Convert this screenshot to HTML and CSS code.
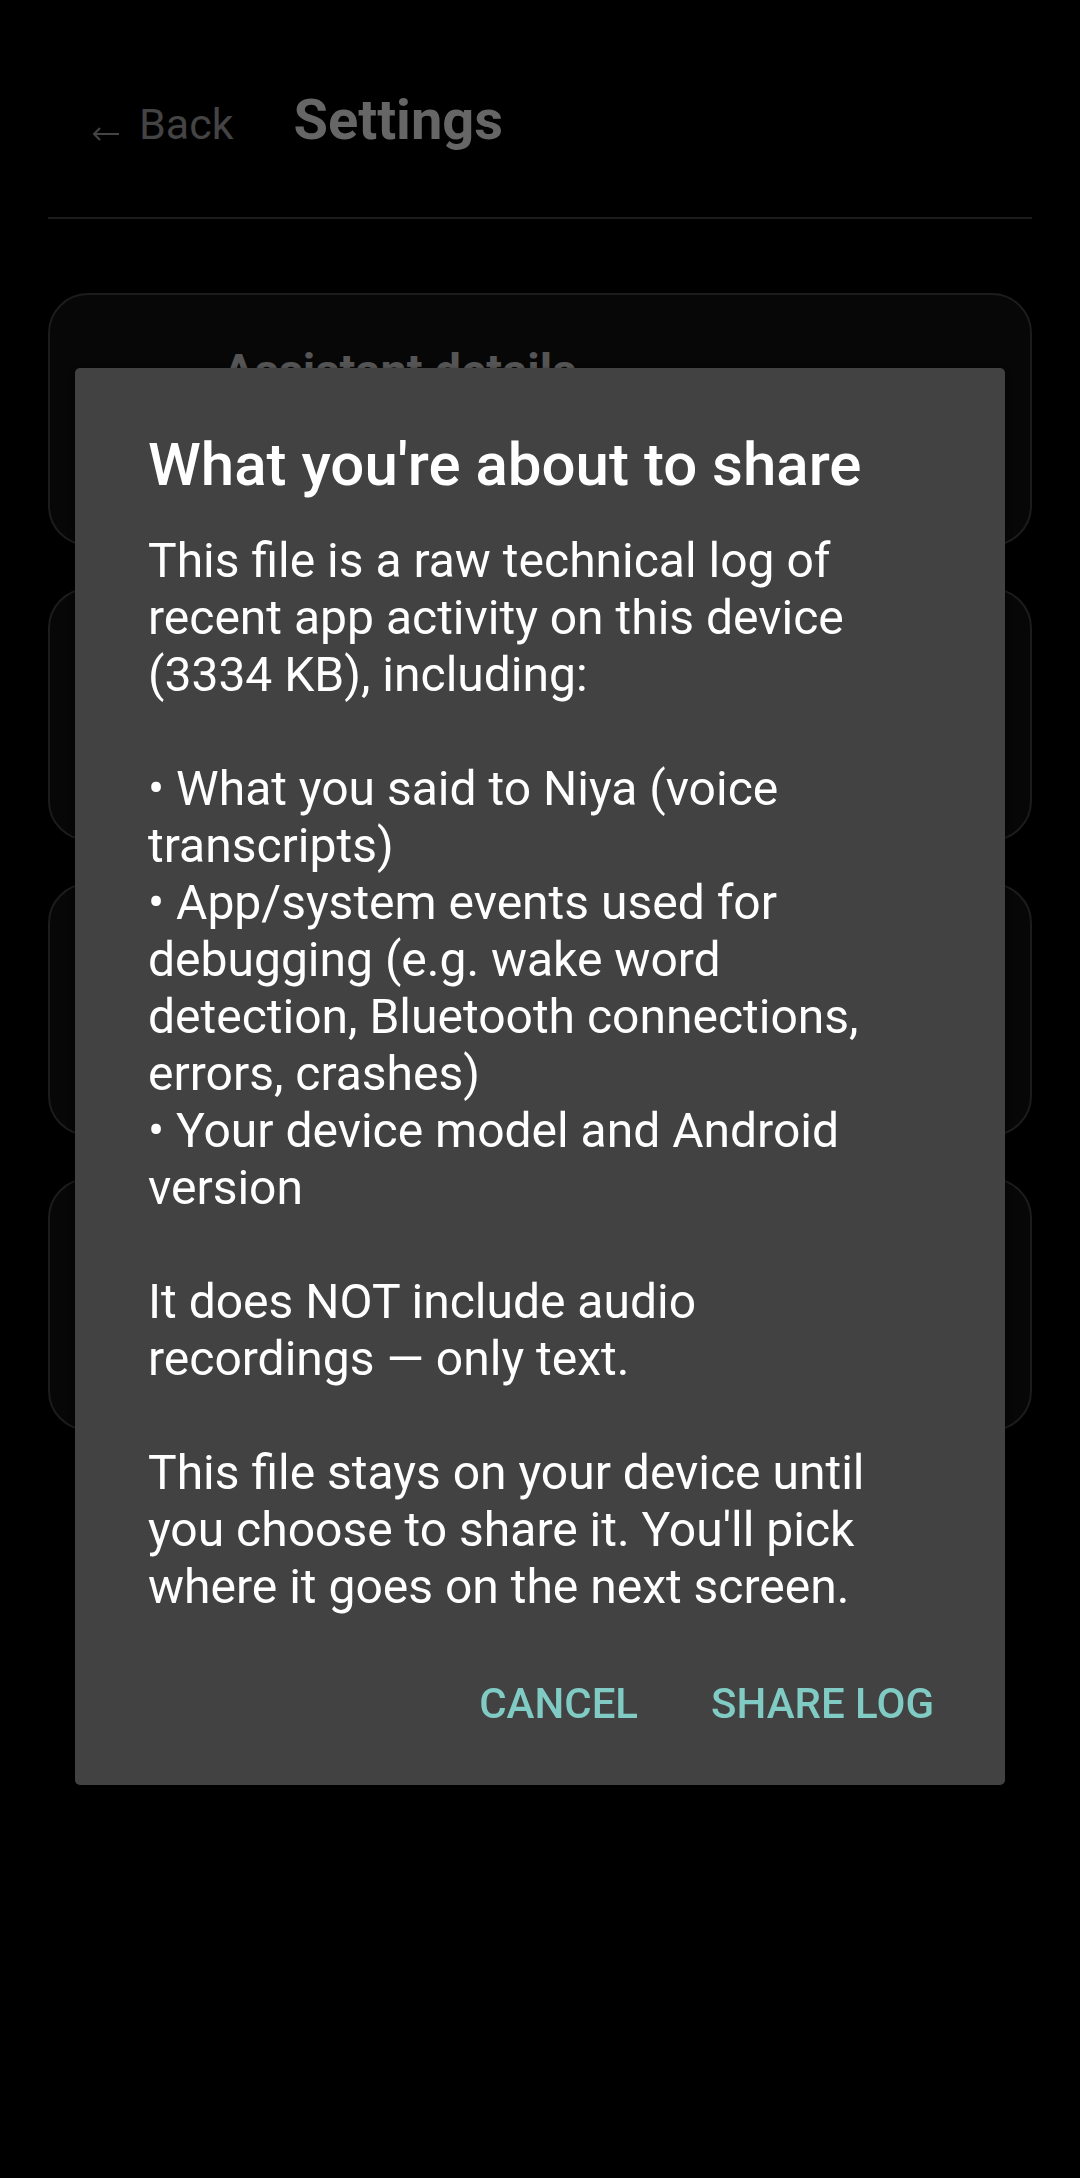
FILE: index.html
```html
<!DOCTYPE html>
<html lang="en">
<head>
<meta charset="utf-8">
<title>Settings</title>
<link rel="stylesheet" href="styles.css">
</head>
<body>
<div class="page">
  <header class="header">
    <div class="back">
      <svg class="back-arrow" width="28" height="16" viewBox="0 0 28 16" aria-hidden="true">
        <path d="M27 8H2M8 2L2 8l6 6" fill="none" stroke="#444" stroke-width="2"/>
      </svg>
      <span class="back-label">Back</span>
    </div>
    <h1 class="title">Settings</h1>
  </header>
  <main class="cards">
    <section class="card"><div class="card-title">Assistant details</div></section>
    <section class="card"></section>
    <section class="card"></section>
    <section class="card"></section>
  </main>
</div>

<div class="scrim">
  <div class="dialog" role="dialog">
    <h2 class="dialog-title">What you're about to share</h2>
    <p class="dialog-body">This file is a raw technical log of<br>recent app activity on this device<br>(3334 KB), including:<br><br>• What you said to Niya (voice<br>transcripts)<br>• App/system events used for<br>debugging (e.g. wake word<br>detection, Bluetooth connections,<br>errors, crashes)<br>• Your device model and Android<br>version<br><br>It does NOT include audio<br>recordings — only text.<br><br>This file stays on your device until<br>you choose to share it. You'll pick<br>where it goes on the next screen.</p>
    <div class="dialog-actions">
      <button class="btn">Cancel</button>
      <button class="btn">Share log</button>
    </div>
  </div>
</div>
</body>
</html>
```

FILE: styles.css
```css
html, body {
  margin: 0;
  padding: 0;
  background: #000;
}
body {
  font-family: Roboto, "Noto Sans", "Liberation Sans", sans-serif;
  width: 1080px;
  height: 2178px;
  overflow: hidden;
}
.page {
  padding: 0 48px;
}
.header {
  display: flex;
  align-items: baseline;
  padding: 88px 0 61px 44px;
  border-bottom: 2px solid #1c1c1c;
}
.back {
  display: flex;
  align-items: baseline;
  gap: 19px;
  color: #444;
  font-size: 43px;
  line-height: 64px;
}
.back-arrow {
  display: block;
  align-self: center;
  position: relative;
  top: 10px;
}
.back-label {
  font-weight: 400;
}
.title {
  margin: 0 0 0 60px;
  font-size: 56px;
  line-height: 64px;
  font-weight: 700;
  color: #666;
}
.cards {
  display: flex;
  flex-direction: column;
  gap: 42px;
  margin-top: 74px;
}
.card {
  height: 249px;
  border: 2px solid #1c1c1c;
  border-radius: 40px;
  background: #070707;
  padding: 0 0 0 173px;
}
.card-title {
  margin-top: 49px;
  font-size: 47px;
  font-weight: 700;
  color: #555;
  line-height: 54px;
}
.scrim {
  position: fixed;
  inset: 0;
  display: flex;
  flex-direction: column;
  padding: 368px 75px 0;
}
.dialog {
  background: #424242;
  border-radius: 5px;
  box-shadow: 0 3px 6px rgba(0, 0, 0, 0.6);
  padding: 62px 71px 57px 73px;
}
.dialog-title {
  margin: 0;
  font-size: 60px;
  font-weight: 500;
  line-height: 70px;
  color: #fff;
}
.dialog-body {
  margin: 32px 0 0;
  font-size: 48px;
  line-height: 57px;
  font-weight: 400;
  color: #fff;
  white-space: nowrap;
}
.dialog-actions {
  display: flex;
  justify-content: flex-end;
  gap: 73px;
  margin-top: 64px;
}
.btn {
  background: none;
  border: 0;
  padding: 0;
  margin: 0;
  font-family: inherit;
  font-size: 42px;
  font-weight: 500;
  line-height: 49px;
  text-transform: uppercase;
  color: #80cbc4;
}
```
